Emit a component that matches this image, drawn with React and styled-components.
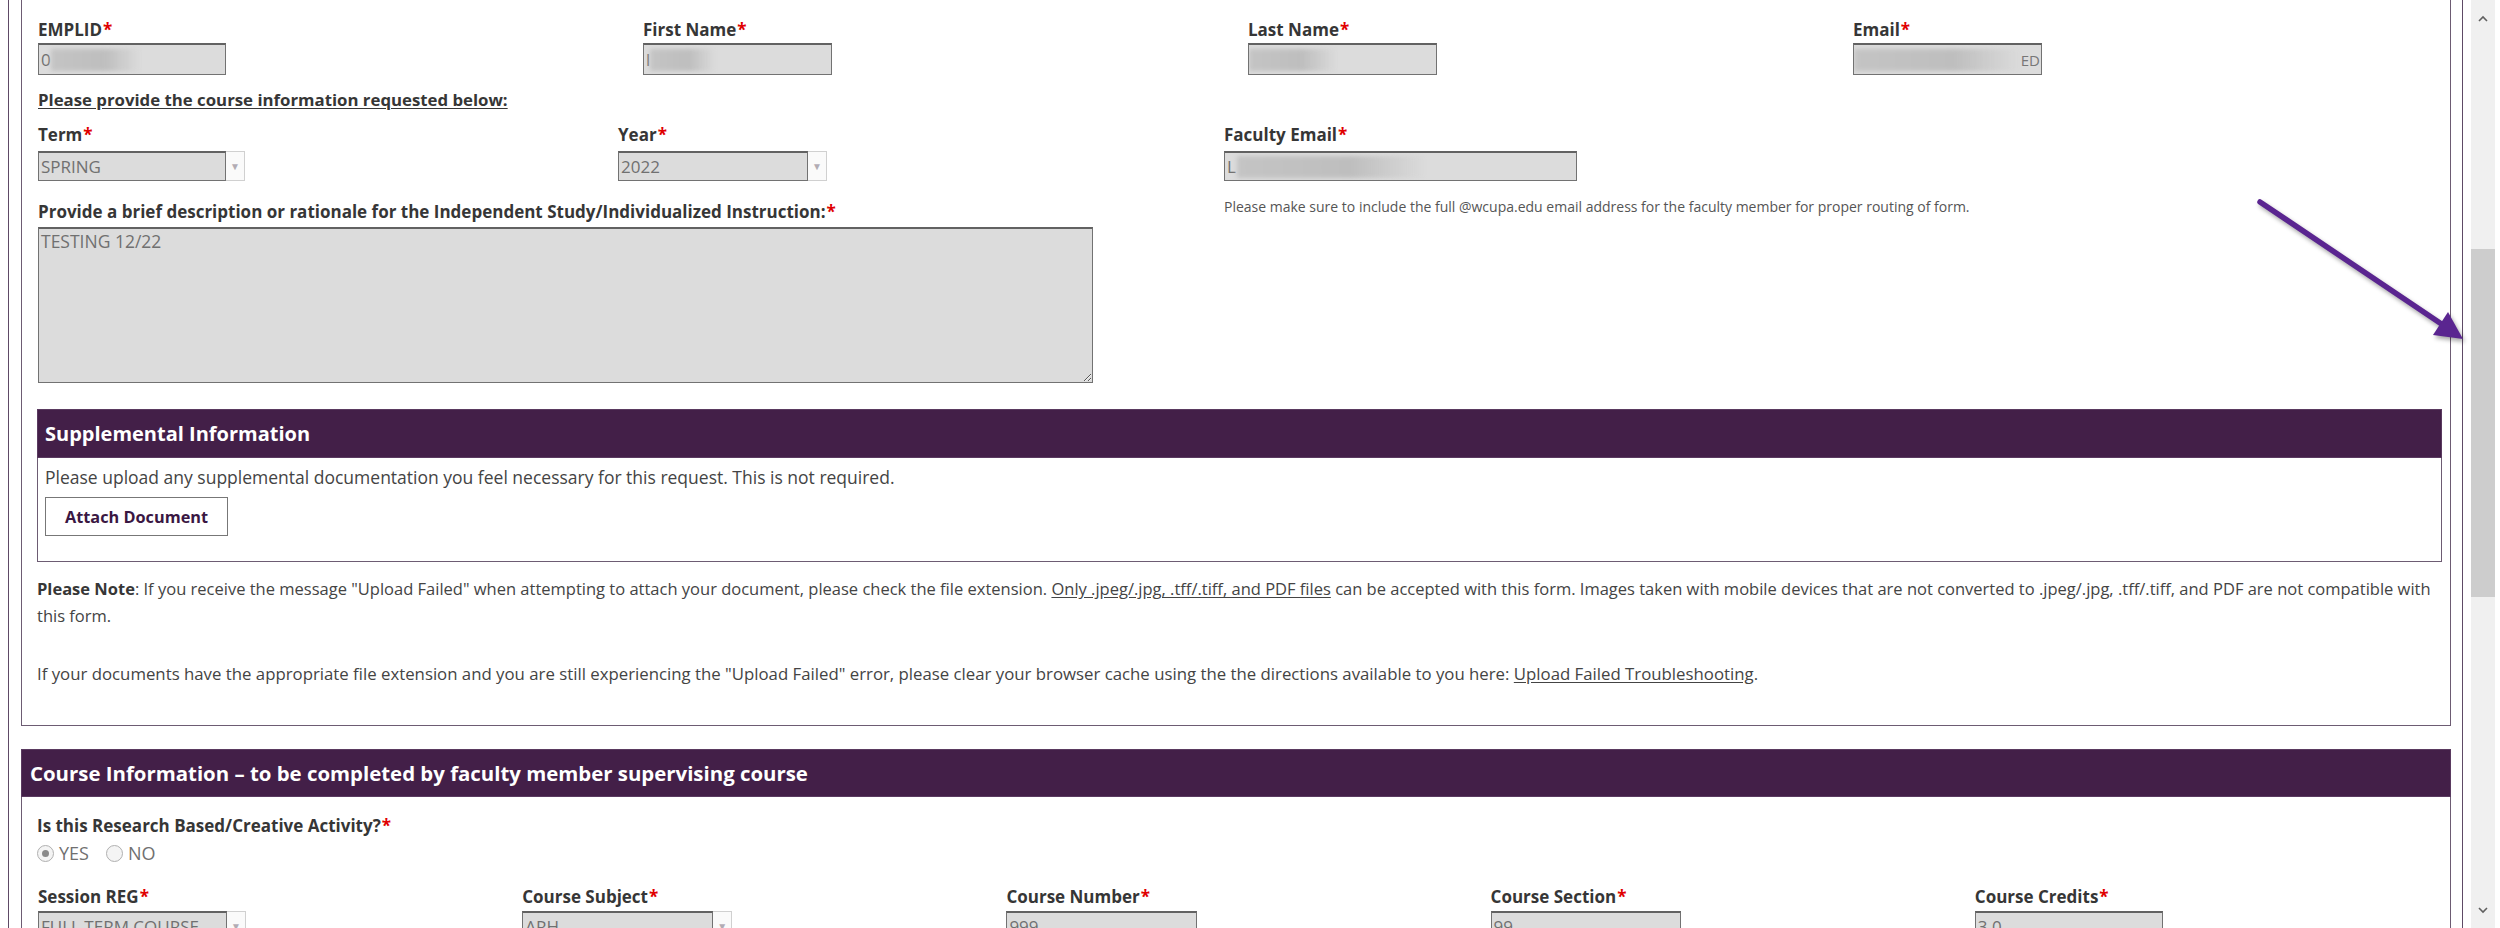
import React from "react";
import styled, { createGlobalStyle } from "styled-components";

const GlobalStyle = createGlobalStyle`
    html, body {
        margin: 0;
        padding: 0;
        background: #fff;
    }
    body {
        font-family: "Open Sans", "Liberation Sans", sans-serif;
        color: #444;
    }
`;

const Page = styled.div`
    position: relative;
    display: flex;
    width: 2500px;
    height: 928px;
    overflow: hidden;
`;

const Frame = styled.div`
    margin-left: 8px;
    width: 2455px;
    box-sizing: border-box;
    border-left: 1px solid #5e4a66;
    border-right: 1px solid #5e4a66;
    padding: 0 11px 0 12px;
    flex-shrink: 0;
`;

const FormBox = styled.div`
    border: 1px solid #6d5c73;
    border-top: none;
    padding: 20px 8px 38px 15px;
`;

const Grid = styled.div`
    display: grid;
    grid-template-columns: ${(p) => p.$cols};
    column-gap: ${(p) => p.$gap || 0}px;
    row-gap: ${(p) => p.$rowGap || 0}px;
    margin-top: ${(p) => p.$top || 0}px;
    padding-left: 1px;
`;

const Cell = styled.div`
    display: flex;
    flex-direction: column;
    align-items: flex-start;
    grid-column: ${(p) => p.$col || "auto"};
    grid-row: ${(p) => p.$row || "auto"};
`;

const Label = styled.div`
    font-size: 17px;
    font-weight: 700;
    line-height: 20px;
    color: #363636;
    white-space: nowrap;
    margin-bottom: ${(p) => p.$gap ?? 3}px;
    margin-top: ${(p) => p.$top || 0}px;
`;

const Req = styled.span`
    color: #e00000;
    margin-left: 1px;
`;

const Heading = styled.div`
    margin-top: 15px;
    font-size: 16.8px;
    font-weight: 700;
    line-height: 20px;
    color: #363636;
    text-decoration: underline;
    text-underline-offset: 2px;
    padding-left: 1px;
`;

const Field = styled.div`
    position: relative;
    display: flex;
    align-items: center;
    width: ${(p) => p.$w}px;
    height: ${(p) => p.$h || 32}px;
    box-sizing: border-box;
    background: #dcdcdc;
    border: 1px solid #727272;
    border-top: 2px solid #626262;
    padding-left: 2px;
    font-size: 17px;
    color: #707070;
    overflow: hidden;
    white-space: nowrap;
`;

const Redact = styled.span`
    display: inline-block;
    width: ${(p) => p.$w}px;
    height: 22px;
    margin-left: ${(p) => p.$ml || 0}px;
    background: linear-gradient(90deg, #c4c4c4 0%, #bebebe 60%, rgba(210, 210, 210, 0) 100%);
    filter: blur(2px);
`;

const Tail = styled.span`
    margin-left: auto;
    padding-right: 1px;
    font-size: 15px;
    color: #777;
`;

const SelectWrap = styled.div`
    display: flex;
    align-items: stretch;
`;

const SelectArrow = styled.div`
    width: 19px;
    box-sizing: border-box;
    border: 1px solid #d0d0d0;
    border-left: none;
    background: #fafafa;
    display: flex;
    align-items: center;
    justify-content: center;
    color: #b2acb4;
    font-size: 10px;
`;

const Hint = styled.div`
    margin-top: 18px;
    font-size: 14px;
    line-height: 16px;
    color: #555;
    white-space: nowrap;
`;

const TextArea = styled.textarea`
    display: block;
    width: 1055px;
    height: 156px;
    box-sizing: border-box;
    margin: 0;
    background: #dcdcdc;
    border: 1px solid #727272;
    border-top: 2px solid #626262;
    padding: 0 2px;
    font-family: "Open Sans", "Liberation Sans", sans-serif;
    font-size: 17.5px;
    color: #707070;
    outline: none;
`;

const Panel = styled.div`
    margin-top: ${(p) => p.$top || 0}px;
`;

const PanelHead = styled.div`
    background: #431f48;
    height: ${(p) => p.$h || 49}px;
    box-sizing: border-box;
    border: 1px solid #5a3a60;
    display: flex;
    align-items: center;
    padding-left: ${(p) => p.$pad || 7}px;
    color: #fff;
    font-size: ${(p) => p.$size || 20}px;
    font-weight: 700;
    white-space: nowrap;
`;

const PanelBody = styled.div`
    border: 1px solid #6d5c73;
    border-top: none;
    padding: 9px 7px 25px;
`;

const BodyText = styled.div`
    font-size: 17.5px;
    line-height: 20px;
    color: #444;
`;

const AttachButton = styled.button`
    margin-top: 10px;
    width: 183px;
    height: 39px;
    background: #fff;
    border: 1px solid #777;
    font-family: "Open Sans", "Liberation Sans", sans-serif;
    font-size: 16.3px;
    font-weight: 700;
    color: #3a1743;
    cursor: pointer;
`;

const Note = styled.p`
    margin: ${(p) => p.$top}px 0 0;
    font-size: ${(p) => p.$size || 16.5}px;
    line-height: 27px;
    color: #444;

    b {
        color: #363636;
    }
    u {
        text-underline-offset: 2px;
    }
`;

const CourseSection = styled.div`
    margin-top: 23px;
`;

const CourseBody = styled.div`
    border-left: 1px solid #6d5c73;
    border-right: 1px solid #6d5c73;
    padding: 19px 8px 0 15px;
`;

const RadioRow = styled.div`
    display: flex;
    align-items: center;
    margin-top: 7px;
    height: 20px;
    font-size: 18px;
    color: #707070;
`;

const RadioItem = styled.label`
    display: flex;
    align-items: center;
    gap: 5px;
    margin-right: 17px;
`;

const RadioDot = styled.span`
    width: 17px;
    height: 17px;
    box-sizing: border-box;
    border-radius: 50%;
    border: 1px solid #b0b0b0;
    background: #f4f4f4;
    display: flex;
    align-items: center;
    justify-content: center;

    &::after {
        content: "";
        width: 7px;
        height: 7px;
        border-radius: 50%;
        background: ${(p) => (p.$on ? "#8a8a8a" : "transparent")};
    }
`;

const Scrollbar = styled.div`
    margin-left: 8px;
    width: 24px;
    flex-shrink: 0;
    background: #f0f0f0;
    display: flex;
    flex-direction: column;
`;

const ScrollButton = styled.div`
    height: 36px;
    display: flex;
    align-items: center;
    justify-content: center;
`;

const ScrollGap = styled.div`
    height: ${(p) => p.$h}px;
    flex: ${(p) => (p.$h ? "none" : 1)};
`;

const Thumb = styled.div`
    height: 348px;
    background: #cdcdcd;
`;

const Annotation = styled.svg`
    position: absolute;
    left: 2250px;
    top: 190px;
    width: 230px;
    height: 170px;
    overflow: visible;
    filter: drop-shadow(2px 3px 2px rgba(0, 0, 0, 0.35));
    pointer-events: none;
`;

const Chevron = ({ up }) => (
    <svg width="10" height="7" viewBox="0 0 10 7">
        <path
            d={up ? "M1 6 L5 2 L9 6" : "M1 1 L5 5 L9 1"}
            fill="none"
            stroke="#606060"
            strokeWidth="1.6"
        />
    </svg>
);

const Select = ({ width, value }) => (
    <SelectWrap>
        <Field $w={width} $h={30}>
            {value}
        </Field>
        <SelectArrow>▼</SelectArrow>
    </SelectWrap>
);

const courseFields = [
    { label: "Session REG", select: true, width: 189, value: "FULL TERM COURSE" },
    { label: "Course Subject", select: true, width: 191, value: "ARH" },
    { label: "Course Number", width: 191, value: "999" },
    { label: "Course Section", width: 190, value: "99" },
    { label: "Course Credits", width: 188, value: "3.0" },
];

const App = () => {
    return (
        <>
            <GlobalStyle />
            <Page>
                <Frame>
                    <FormBox>
                        <Grid $cols="repeat(4, 1fr)" $gap={16}>
                            <Cell>
                                <Label>
                                    EMPLID<Req>*</Req>
                                </Label>
                                <Field $w={188}>
                                    0<Redact $w={90} />
                                </Field>
                            </Cell>
                            <Cell>
                                <Label>
                                    First Name<Req>*</Req>
                                </Label>
                                <Field $w={189}>
                                    l<Redact $w={66} />
                                </Field>
                            </Cell>
                            <Cell>
                                <Label>
                                    Last Name<Req>*</Req>
                                </Label>
                                <Field $w={189}>
                                    <Redact $w={88} $ml={-2} />
                                </Field>
                            </Cell>
                            <Cell>
                                <Label>
                                    Email<Req>*</Req>
                                </Label>
                                <Field $w={189}>
                                    <Redact $w={172} $ml={-2} />
                                    <Tail>ED</Tail>
                                </Field>
                            </Cell>
                        </Grid>

                        <Heading>Please provide the course information requested below:</Heading>

                        <Grid $cols="580px 606px 1fr" $rowGap={21} $top={15}>
                            <Cell $col="1" $row="1">
                                <Label $gap={6}>
                                    Term<Req>*</Req>
                                </Label>
                                <Select width={188} value="SPRING" />
                            </Cell>
                            <Cell $col="2" $row="1">
                                <Label $gap={6}>
                                    Year<Req>*</Req>
                                </Label>
                                <Select width={190} value="2022" />
                            </Cell>
                            <Cell $col="3" $row="1 / span 2">
                                <Label $gap={6}>
                                    Faculty Email<Req>*</Req>
                                </Label>
                                <Field $w={353} $h={30}>
                                    L<Redact $w={190} $ml={1} />
                                </Field>
                                <Hint>
                                    Please make sure to include the full @wcupa.edu email address for
                                    the faculty member for proper routing of form.
                                </Hint>
                            </Cell>
                            <Cell $col="1 / span 2" $row="2">
                                <Label $gap={5}>
                                    Provide a brief description or rationale for the Independent
                                    Study/Individualized Instruction:<Req>*</Req>
                                </Label>
                                <TextArea readOnly value="TESTING 12/22" />
                            </Cell>
                        </Grid>

                        <Panel $top={26}>
                            <PanelHead>Supplemental Information</PanelHead>
                            <PanelBody>
                                <BodyText>
                                    Please upload any supplemental documentation you feel necessary
                                    for this request. This is not required.
                                </BodyText>
                                <AttachButton type="button">Attach Document</AttachButton>
                            </PanelBody>
                        </Panel>

                        <Note $top={13}>
                            <b>Please Note</b>: If you receive the message "Upload Failed" when
                            attempting to attach your document, please check the file extension.{" "}
                            <u>Only .jpeg/.jpg, .tff/.tiff, and PDF files</u> can be accepted with
                            this form. Images taken with mobile devices that are not converted to
                            .jpeg/.jpg, .tff/.tiff, and PDF are not compatible with this form.
                        </Note>
                        <Note $top={31} $size={16.8}>
                            If your documents have the appropriate file extension and you are still
                            experiencing the "Upload Failed" error, please clear your browser cache
                            using the the directions available to you here:{" "}
                            <u>Upload Failed Troubleshooting</u>.
                        </Note>
                    </FormBox>

                    <CourseSection>
                        <PanelHead $h={48} $pad={8} $size={20.4}>
                            Course Information – to be completed by faculty member supervising course
                        </PanelHead>
                        <CourseBody>
                            <Label $gap={0}>
                                Is this Research Based/Creative Activity?<Req>*</Req>
                            </Label>
                            <RadioRow>
                                <RadioItem>
                                    <RadioDot $on />
                                    YES
                                </RadioItem>
                                <RadioItem>
                                    <RadioDot />
                                    NO
                                </RadioItem>
                            </RadioRow>
                            <Grid $cols="repeat(5, 1fr)" $gap={17} $top={24}>
                                {courseFields.map((f) => (
                                    <Cell key={f.label}>
                                        <Label $gap={4}>
                                            {f.label}
                                            <Req>*</Req>
                                        </Label>
                                        {f.select ? (
                                            <Select width={f.width} value={f.value} />
                                        ) : (
                                            <Field $w={f.width} $h={30}>
                                                {f.value}
                                            </Field>
                                        )}
                                    </Cell>
                                ))}
                            </Grid>
                        </CourseBody>
                    </CourseSection>
                </Frame>

                <Scrollbar>
                    <ScrollButton>
                        <Chevron up />
                    </ScrollButton>
                    <ScrollGap $h={213} />
                    <Thumb />
                    <ScrollGap />
                    <ScrollButton>
                        <Chevron />
                    </ScrollButton>
                </Scrollbar>

                <Annotation viewBox="0 0 230 170">
                    <line
                        x1="10"
                        y1="12"
                        x2="193"
                        y2="135"
                        stroke="#5a2590"
                        strokeWidth="5.5"
                        strokeLinecap="round"
                    />
                    <polygon points="213,149 183,145 198,122" fill="#5a2590" />
                </Annotation>
            </Page>
        </>
    );
};

export default App;
